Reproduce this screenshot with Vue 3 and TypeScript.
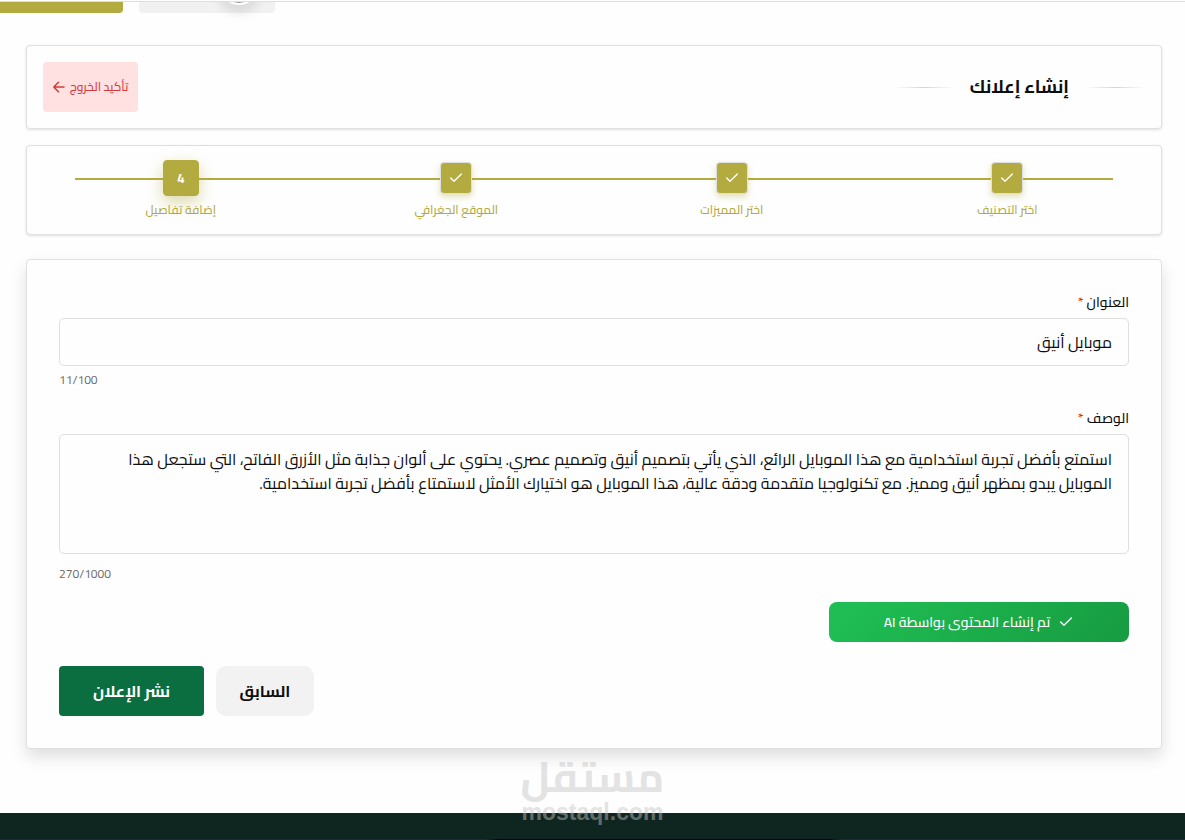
<script setup lang="ts">
import { computed, ref } from 'vue'

interface Step {
  id: number
  label: string
  done: boolean
}

const steps: Step[] = [
  { id: 1, label: 'اختر التصنيف', done: true },
  { id: 2, label: 'اختر المميزات', done: true },
  { id: 3, label: 'الموقع الجغرافي', done: true },
  { id: 4, label: 'إضافة تفاصيل', done: false },
]

const title = ref('موبايل أنيق')
const description = ref(
  'استمتع بأفضل تجربة استخدامية مع هذا الموبايل الرائع، الذي يأتي بتصميم أنيق وتصميم عصري. يحتوي على ألوان جذابة مثل الأزرق الفاتح، التي ستجعل هذا الموبايل يبدو بمظهر أنيق ومميز. مع تكنولوجيا متقدمة ودقة عالية، هذا الموبايل هو اختيارك الأمثل لاستمتاع بأفضل تجربة استخدامية.',
)
const savedDescription = description.value
const savedCount = 270

const titleCount = computed(() => `${title.value.length}/100`)
const descriptionCount = computed(
  () => `${savedCount + description.value.length - savedDescription.length}/1000`,
)
</script>

<template>
  <div class="page" dir="rtl">
    <header class="topbar">
      <div class="tab tab-muted"><span class="knob"></span></div>
      <div class="tab tab-olive"></div>
    </header>

    <main class="content">
      <section class="card heading">
        <div class="title-row">
          <span class="rule"></span>
          <h1>إنشاء إعلانك</h1>
          <span class="rule"></span>
        </div>
        <button type="button" class="exit">
          <span>تأكيد الخروج</span>
          <svg width="12" height="12" viewBox="0 0 12 12" fill="none" stroke="currentColor" stroke-width="1.5" stroke-linecap="round" stroke-linejoin="round">
            <path d="M11 6H1M5.5 1.2L.8 6l4.700 4.800" />
          </svg>
        </button>
      </section>

      <section class="card">
        <ol class="steps">
          <li v-for="step in steps" :key="step.id" class="step">
            <span class="marker" :class="{ active: !step.done }">
              <svg v-if="step.done" width="16" height="16" viewBox="0 0 24 24" fill="none" stroke="currentColor" stroke-width="2" stroke-linecap="round" stroke-linejoin="round">
                <path d="M20 6 9 17l-5-5" />
              </svg>
              <template v-else>{{ step.id }}</template>
            </span>
            <span class="step-label">{{ step.label }}</span>
          </li>
        </ol>
      </section>

      <form class="card form" @submit.prevent>
        <div class="field">
          <label for="ad-title">العنوان <span class="star">*</span></label>
          <input id="ad-title" v-model="title" type="text" maxlength="100" />
          <span class="counter" dir="ltr">{{ titleCount }}</span>
        </div>
        <div class="field">
          <label for="ad-description">الوصف <span class="star">*</span></label>
          <textarea id="ad-description" v-model="description"></textarea>
          <span class="counter low" dir="ltr">{{ descriptionCount }}</span>
        </div>
        <button type="button" class="ai">
          <svg width="16" height="16" viewBox="0 0 24 24" fill="none" stroke="currentColor" stroke-width="2" stroke-linecap="round" stroke-linejoin="round">
            <path d="M20 6 9 17l-5-5" />
          </svg>
          <span>تم إنشاء المحتوى بواسطة AI</span>
        </button>
        <div class="actions">
          <button type="button" class="previous">السابق</button>
          <button type="submit" class="publish">نشر الإعلان</button>
        </div>
      </form>
    </main>

    <footer class="footer">
      <div class="watermark">
        <span class="mark-ar">مستقل</span>
        <span class="mark-en" dir="ltr">mostaql.com</span>
      </div>
    </footer>
  </div>
</template>

<style>
body {
  background: #fefefe;
}
</style>

<style scoped>
.page,
.page * {
  box-sizing: border-box;
}
.page {
  min-height: 100vh;
  display: flex;
  flex-direction: column;
  overflow: hidden;
  background: #fefefe;
  color: #0d0d0d;
  font-family: Cairo, "Noto Sans", "DejaVu Sans", sans-serif;
}
button,
input,
textarea {
  font-family: inherit;
}
button {
  border: 0;
  cursor: pointer;
}
.topbar {
  display: flex;
  justify-content: flex-end;
  gap: 16px;
  height: 13px;
  position: relative;
}
.topbar::before {
  content: "";
  position: absolute;
  inset: 0 0 auto;
  height: 1px;
  background: #fefefe;
  border-bottom: 1px solid #dedede;
  z-index: 1;
}
.tab {
  height: 13px;
}
.tab-olive {
  width: 123px;
  background: #b3aa40;
  border-radius: 0 0 4px 0;
}
.tab-muted {
  width: 136px;
  background: #f1f1f1;
  border-radius: 0 0 4px 4px;
  position: relative;
}
.knob {
  position: absolute;
  left: 80px;
  bottom: 8px;
  width: 40px;
  height: 40px;
  border-radius: 50%;
  border: 2px solid #fff;
  background: #999;
  box-shadow: 0 8px 12px rgba(0, 0, 0, 0.1);
}
.content {
  flex: 1;
  padding: 32px 23px 64px 26px;
}
.card {
  background: #fefefe;
  border: 1px solid #dfe0e0;
  border-radius: 4px;
  padding: 16px;
  margin-bottom: 16px;
  box-shadow: 0 1px 3px rgba(0, 0, 0, 0.12);
}
.heading {
  display: flex;
  justify-content: space-between;
  align-items: center;
}
.title-row {
  display: flex;
  align-items: center;
  gap: 16px;
}
.rule {
  width: 60px;
  height: 1px;
  background: linear-gradient(90deg, transparent, #dcd9ae, transparent);
}
h1 {
  margin: 0;
  font-size: 18px;
  line-height: 28px;
  font-weight: 700;
}
.exit {
  display: flex;
  align-items: center;
  justify-content: center;
  gap: 5px;
  width: 95px;
  height: 50px;
  padding: 0;
  border-radius: 4px;
  background: #ffe1e1;
  color: #d23b3b;
  font-size: 12px;
  font-weight: 500;
  line-height: 16px;
  white-space: nowrap;
}
.steps {
  position: relative;
  display: grid;
  grid-template-columns: repeat(4, 1fr);
  margin: 0;
  padding: 0;
  list-style: none;
}
.steps::before {
  content: "";
  position: absolute;
  top: 16px;
  left: 32px;
  right: 32px;
  height: 2px;
  background: #b3aa40;
}
.step {
  display: flex;
  flex-direction: column;
  align-items: center;
  gap: 8px;
  position: relative;
}
.marker {
  display: flex;
  align-items: center;
  justify-content: center;
  width: 32px;
  height: 32px;
  border: 1px solid #dedfe0;
  border-radius: 4px;
  background: #b3aa40;
  color: #fff;
  box-shadow: 0 3px 6px rgba(179, 170, 64, 0.35);
}
.marker.active {
  width: 36px;
  height: 36px;
  margin: -2px;
  border-color: #b3aa40;
  font-size: 13px;
  font-weight: 700;
  box-shadow: 0 6px 16px rgba(179, 170, 64, 0.45);
}
.step-label {
  font-size: 12px;
  font-weight: 500;
  line-height: 16px;
  color: #b3aa40;
}
.form {
  margin: 24px 0 0;
  padding: 32px;
  box-shadow: 0 8px 16px rgba(0, 0, 0, 0.12);
}
.field {
  display: flex;
  flex-direction: column;
  margin-bottom: 20px;
}
label {
  font-size: 14px;
  font-weight: 500;
  line-height: 20px;
  margin-bottom: 6px;
}
.star {
  color: #e02b2b;
}
input,
textarea {
  display: block;
  width: 100%;
  border: 1px solid #dfdfdf;
  border-radius: 5px;
  background: #fefefe;
  color: #0d0d0d;
  font-size: 16px;
  line-height: 24px;
  outline: none;
  resize: none;
}
input {
  height: 48px;
  padding: 0 16px;
}
textarea {
  height: 120px;
  padding: 12px 16px;
}
.counter {
  margin-top: 6px;
  font-size: 12px;
  line-height: 16px;
  text-align: left;
  color: #6b6b6b;
}
.counter.low {
  margin-top: 12px;
}
.ai {
  display: flex;
  align-items: center;
  justify-content: center;
  gap: 8px;
  width: 300px;
  height: 40px;
  border-radius: 8px;
  background: linear-gradient(135deg, #1fbd53 10%, #179b41);
  color: #fff;
  font-size: 14px;
  font-weight: 500;
}
.actions {
  display: flex;
  justify-content: flex-end;
  gap: 12px;
  margin-top: 24px;
}
.actions button {
  height: 50px;
  font-size: 16px;
  font-weight: 700;
  padding: 0;
}
.previous {
  width: 98px;
  border-radius: 10px;
  background: #f2f2f2;
  color: #0d0d0d;
}
.publish {
  width: 145px;
  border-radius: 4px;
  background: #0b6e40;
  color: #fff;
}
.footer {
  position: relative;
  height: 27px;
  background: #0f251f;
}
.footer::after {
  content: "";
  position: absolute;
  inset: auto 0 0;
  height: 1px;
  background: linear-gradient(90deg, #1e293b 41%, #04042c 42%, #04042c 70%, #1e293b 71%);
}
.watermark {
  position: absolute;
  left: 50%;
  bottom: 18px;
  transform: translateX(-50%);
  display: flex;
  flex-direction: column;
  align-items: center;
  gap: 4px;
  color: #c3c3c3;
  opacity: 0.45;
  font-weight: 700;
  pointer-events: none;
}
.mark-ar {
  font-size: 42px;
  line-height: 42px;
}
.mark-en {
  font-family: "Liberation Sans", Arial, sans-serif;
  font-size: 23px;
  line-height: 20px;
}
</style>
